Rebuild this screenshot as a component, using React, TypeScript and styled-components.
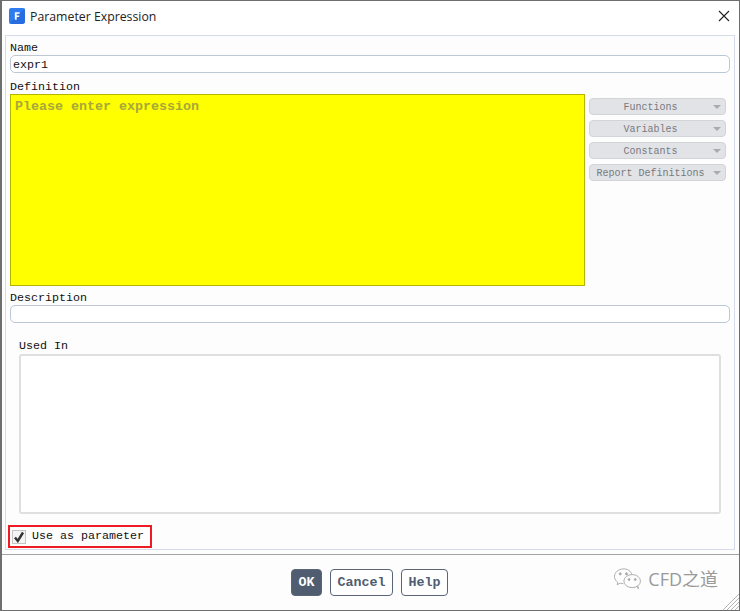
import styled, { createGlobalStyle } from "styled-components";

const mono = `"Liberation Mono", "DejaVu Sans Mono", monospace`;

const GlobalStyle = createGlobalStyle`
  html, body {
    margin: 0;
    padding: 0;
    background: #fdfdfd;
  }
`;

// The dialog is split into three bands: title bar, form panel, button footer.
const Dialog = styled.div`
  position: relative;
  box-sizing: border-box;
  width: 740px;
  height: 611px;
  display: flex;
  flex-direction: column;
  border: 1px solid #6e6e6e;
  border-left-width: 2px;
  background: #fdfdfd;
  overflow: hidden;
`;

const TitleBar = styled.div`
  box-sizing: border-box;
  height: 34px;
  flex: none;
  display: flex;
  align-items: center;
  gap: 5px;
  padding: 0 9px 4px 7px;
  background: #ffffff;
`;

const TitleText = styled.span`
  flex: 1;
  font: 12.3px "Open Sans", "Noto Sans", sans-serif;
  color: #222222;
`;

const Panel = styled.div`
  box-sizing: border-box;
  height: 515px;
  margin: 0 4px 0 3px;
  flex: none;
  padding: 4px 4px 0;
  display: flex;
  flex-direction: column;
  border: 1px solid #d5dbe8;
  background: #fdfdfe;
`;

const Label = styled.label`
  display: block;
  height: 15px;
  font: 11.67px/16px ${mono};
  color: #111111;
`;

const TextInput = styled.div<{ $mb: number }>`
  box-sizing: border-box;
  height: 18px;
  margin-bottom: ${(p) => p.$mb}px;
  padding-left: 2px;
  border: 1px solid #bcc8d6;
  border-radius: 5px;
  background: #ffffff;
  font: 11.67px/19px ${mono};
  color: #111111;
`;

const DefinitionRow = styled.div`
  display: flex;
  height: 192px;
  gap: 4px;
  margin-bottom: 4px;
`;

const Expression = styled.div`
  box-sizing: border-box;
  width: 575px;
  padding: 4px 4px;
  background: #ffff00;
  border: 1px solid #b5b500;
  font: bold 13.33px/15px ${mono};
  color: #a8a83a;
`;

const MenuColumn = styled.div`
  width: 137px;
  padding-top: 4px;
  display: flex;
  flex-direction: column;
  gap: 5px;
`;

const MenuButton = styled.div`
  position: relative;
  box-sizing: border-box;
  height: 17px;
  padding: 2px 14px 0 0;
  display: flex;
  align-items: center;
  justify-content: center;
  border: 1px solid #d3d4d8;
  border-radius: 4px;
  background: #e2e3e7;
  font: 10px/15px ${mono};
  color: #777a80;
`;

const Caret = styled.span`
  position: absolute;
  right: 4px;
  top: 6px;
  width: 0;
  height: 0;
  border-left: 4px solid transparent;
  border-right: 4px solid transparent;
  border-top: 4px solid #a9abb0;
`;

const UsedIn = styled.div`
  flex: 1;
  display: flex;
  flex-direction: column;
  padding: 15px 9px 0;
`;

const UsedInList = styled.div`
  box-sizing: border-box;
  height: 160px;
  margin-top: 1px;
  border: 2px solid #dfdfdf;
  border-radius: 3px;
  background: #ffffff;
`;

const CheckRow = styled.div`
  box-sizing: border-box;
  width: 144px;
  height: 23px;
  margin: 10px 0 1px -2px;
  padding-left: 2px;
  display: flex;
  align-items: center;
  gap: 6px;
  border: 2px solid #ed1c24;
  font: 11.67px/17px ${mono};
  color: #111111;
`;

const CheckBox = styled.span`
  box-sizing: border-box;
  width: 14px;
  height: 14px;
  display: flex;
  align-items: center;
  justify-content: center;
  border: 1px solid #c4c4c4;
  background: #f4f4f4;
`;

const Footer = styled.div`
  flex: 1;
  margin-top: 4px;
  display: flex;
  justify-content: center;
  align-items: center;
  gap: 8px;
  padding: 0 2px 1px 0;
  border-top: 1px solid #a3a3a3;
`;

const DialogButton = styled.button<{ $primary?: boolean }>`
  box-sizing: border-box;
  height: 27px;
  padding: 0 6.5px;
  border: 1px solid #5a6678;
  border-radius: 4px;
  background: ${(p) => (p.$primary ? "#505d71" : "#ffffff")};
  color: ${(p) => (p.$primary ? "#ffffff" : "#505d71")};
  font: bold 13.33px ${mono};
`;

// Watermark and resize grip lie over the footer
const Watermark = styled.div`
  position: absolute;
  right: 21px;
  bottom: 19px;
  display: flex;
  align-items: center;
  gap: 6px;
  font: 18px "Open Sans", "Noto Sans CJK SC", sans-serif;
  color: #999999;
`;

const Grip = styled.svg`
  position: absolute;
  right: 0;
  bottom: 0;
`;

const AppIcon = () => (
  <svg width="16" height="16" viewBox="0 0 15 15">
    <rect width="15" height="15" rx="2" fill="#2f7bf0" />
    <path d="M0 15 L15 0 V13 a2 2 0 0 1 -2 2 Z" fill="#1f5fd0" opacity="0.5" />
    <path d="M5.5 4 H10 V5.4 H7.2 V7 H9.6 V8.4 H7.2 V11 H5.5 Z" fill="#ffffff" />
  </svg>
);

const CloseIcon = () => (
  <svg width="12" height="12" viewBox="0 0 12 12">
    <path d="M1 1 L11 11 M11 1 L1 11" stroke="#222222" strokeWidth="1.1" fill="none" />
  </svg>
);

const CheckMark = () => (
  <svg width="12" height="12" viewBox="0 0 12 12">
    <path d="M2 6.5 L4.8 10 L10 1.5" stroke="#333333" strokeWidth="2.4" fill="none" />
  </svg>
);

const WeChatIcon = () => (
  <svg width="29" height="23" viewBox="0 0 28 22" fill="none" stroke="#a8a8a8" strokeWidth="0.9">
    <path d="M18 6.5 C16.5 2.5 12 1 8 2 C3.5 3 1 6.5 1.5 10 C1.8 12 3 13.5 4.5 14.5 L4 17 L7 15.5 C8 15.8 9 16 10 16" />
    <ellipse cx="18.5" cy="13.5" rx="8" ry="6.3" />
    <path d="M23 19 L24.5 21 L24 18" />
    <circle cx="7" cy="6.5" r="1" fill="#a8a8a8" />
    <circle cx="13" cy="6.5" r="1" fill="#a8a8a8" />
    <circle cx="15.5" cy="12" r="0.9" fill="#a8a8a8" />
    <circle cx="21.5" cy="12" r="0.9" fill="#a8a8a8" />
  </svg>
);

const menus = ["Functions", "Variables", "Constants", "Report Definitions"];

const App = () => (
  <Dialog>
    <GlobalStyle />
    <TitleBar>
      <AppIcon />
      <TitleText>Parameter Expression</TitleText>
      <CloseIcon />
    </TitleBar>
    <Panel>
      <Label>Name</Label>
      <TextInput $mb={6}>expr1</TextInput>
      <Label>Definition</Label>
      <DefinitionRow>
        <Expression>Please enter expression</Expression>
        <MenuColumn>
          {menus.map((menu) => (
            <MenuButton key={menu}>
              {menu}
              <Caret />
            </MenuButton>
          ))}
        </MenuColumn>
      </DefinitionRow>
      <Label>Description</Label>
      <TextInput $mb={0} />
      <UsedIn>
        <Label>Used In</Label>
        <UsedInList />
      </UsedIn>
      <CheckRow>
        <CheckBox>
          <CheckMark />
        </CheckBox>
        Use as parameter
      </CheckRow>
    </Panel>
    <Footer>
      <DialogButton $primary>OK</DialogButton>
      <DialogButton>Cancel</DialogButton>
      <DialogButton>Help</DialogButton>
    </Footer>
    <Watermark>
      <WeChatIcon />
      CFD之道
    </Watermark>
    <Grip width="16" height="16" viewBox="0 0 16 16" stroke="#b5b5b5" strokeWidth="1">
      <path d="M0 16 L16 0 M4 16 L16 4 M8 16 L16 8 M12 16 L16 12" />
    </Grip>
  </Dialog>
);

export default App;
